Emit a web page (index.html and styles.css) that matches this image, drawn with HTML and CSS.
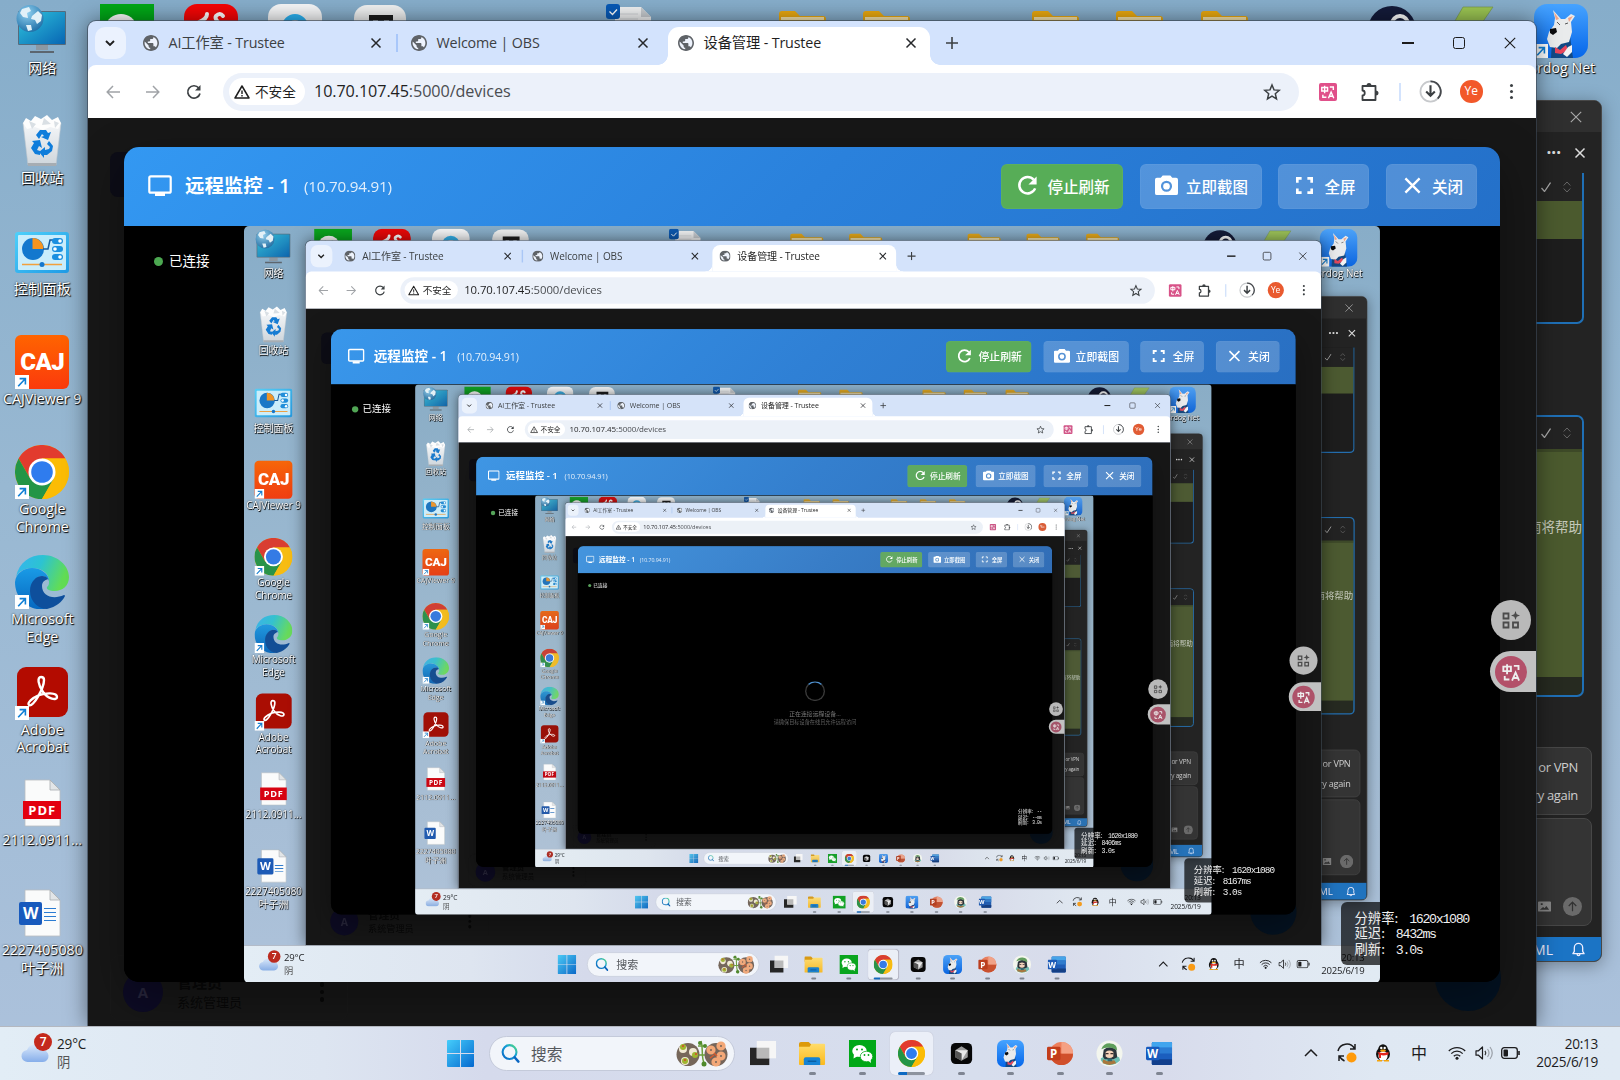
FILE: index.html
```html
<!DOCTYPE html>
<html lang="zh-CN">
<head>
<meta charset="utf-8">
<title>设备管理 - Trustee</title>
<link rel="stylesheet" href="styles.css">
</head>
<body>
<svg class="sprite" width="0" height="0" aria-hidden="true">
  <defs>
    <linearGradient id="g-screen" x1="0" y1="0" x2="1" y2="1"><stop offset="0" stop-color="#2fc4dc"/><stop offset="1" stop-color="#0866b4"/></linearGradient>
    <radialGradient id="g-globe" cx=".4" cy=".3" r=".8"><stop offset="0" stop-color="#8fd0f0"/><stop offset="1" stop-color="#1566a0"/></radialGradient>
    <linearGradient id="g-panel" x1="0" y1="0" x2="1" y2="1"><stop offset="0" stop-color="#4fd0fa"/><stop offset="1" stop-color="#1f9be6"/></linearGradient>
    <linearGradient id="g-bin" x1="0" y1="0" x2="0" y2="1"><stop offset="0" stop-color="#f4f6f8"/><stop offset="1" stop-color="#cfd6dc"/></linearGradient>
    <linearGradient id="g-edge-top" x1="0" y1="0" x2="1" y2=".3"><stop offset="0" stop-color="#35b3f2"/><stop offset=".5" stop-color="#2cc3d2"/><stop offset="1" stop-color="#62dd54"/></linearGradient>
    <linearGradient id="g-edge-mid" x1="0" y1="0" x2="0" y2="1"><stop offset="0" stop-color="#1a9be6"/><stop offset="1" stop-color="#0668c0"/></linearGradient>
    <linearGradient id="g-dog" x1="0" y1="0" x2="0" y2="1"><stop offset="0" stop-color="#46a3ff"/><stop offset="1" stop-color="#0566ea"/></linearGradient>
    <linearGradient id="g-win" x1="0" y1="0" x2="1" y2="1"><stop offset="0" stop-color="#45cdfb"/><stop offset="1" stop-color="#0569cf"/></linearGradient>
    <linearGradient id="g-lens" x1="0" y1="1" x2="1" y2="0"><stop offset="0" stop-color="#0a67c4"/><stop offset=".6" stop-color="#149ed8"/><stop offset="1" stop-color="#57e078"/></linearGradient>
    <linearGradient id="g-folder" x1="0" y1="0" x2="0" y2="1"><stop offset="0" stop-color="#ffdc6a"/><stop offset="1" stop-color="#fbb91c"/></linearGradient>
    <linearGradient id="g-cloud" x1="0" y1="0" x2="0" y2="1"><stop offset="0" stop-color="#d9e8fb"/><stop offset="1" stop-color="#86aeea"/></linearGradient>
  </defs>

  <symbol id="i-shortcut" viewBox="0 0 14 14"><path fill="#fff" d="M0 0h14v14H0z"/><path fill="none" stroke="#0f7fd6" stroke-width="1.6" d="M3.2 11.2 10 4M4.6 3.6h5.8v5.8"/></symbol>
  <symbol id="i-network" viewBox="0 0 54 54">
    <path fill="#8b98a3" d="M21 41h12v5H21z"/><path fill="#5c666f" d="M15 47h24v2H15z"/>
    <rect x="3" y="7" width="48" height="34" rx="1" fill="#556b7d"/><rect x="4" y="8" width="46" height="32" fill="url(#g-screen)"/>
    <circle cx="15" cy="14.500" r="13.500" fill="url(#g-globe)"/><path fill="#e2f1f8" d="M7 5l7-2 2 4-4 2 1 5-5-1-3-4zM17 12l6-5 4 4-1 6-4 3-2-4-4-1zM11 21l5 0 1 5-4 1z"/>
  </symbol>
  <symbol id="i-bin" viewBox="0 0 54 54">
    <path fill="url(#g-bin)" stroke="#c0c8ce" stroke-width=".6" d="M8 9h38l-5 42H13z"/><path fill="#a6adb3" d="M12.500 49h29l-.4 3H13z"/>
    <path fill="#fdfdfd" d="M8 9l3-5 5 3 4-5 6 3 6-4 5 5 6-3 3 6-3 6-8-2-7 3-8-3-8 2z"/><path fill="#d9dfe4" d="M14 7l7 3-4 5zM29 4l7 6-9 1zM39 7l5 2-4 5z"/>
    <path fill="#0f7ddb" d="M21 21l4-5h6l2 3 3-1-3 8-7-3 3-1-2-2-3 5zM17 27l8-1 2 8-3-2-2 4 3 1v4l-5-1-4-6 3-5zM34 27l4 5-1 5-5 4h-3v3l-5-6 6-5v3l4-1 1-2-3-3z"/>
  </symbol>
  <symbol id="i-panel" viewBox="0 0 54 54">
    <rect y="7" width="54" height="41" rx="3" fill="url(#g-panel)"/><rect x="3" y="10" width="48" height="35" rx="1" fill="#c9edfc"/>
    <circle cx="18" cy="24" r="11" fill="#1378ce"/><path fill="#f6941e" d="M17.500 13a11 11 0 0 1 11 11h-11z"/>
    <path fill="none" stroke="#15599c" stroke-width="1.500" d="M28 24h5l2-9h3"/>
    <g fill="#1a8fe0"><rect x="37" y="13" width="11" height="6" rx="3"/><rect x="37" y="21" width="11" height="6" rx="3"/><rect x="37" y="29" width="11" height="6" rx="3"/></g>
    <g fill="#fff"><circle cx="45" cy="16" r="1.800"/><circle cx="40" cy="24" r="1.800"/><circle cx="45" cy="32" r="1.800"/></g>
    <path stroke="#f2a03c" stroke-width="1.500" d="M7 39.500h40"/><circle cx="27" cy="39.500" r="2.500" fill="#1378ce"/>
  </symbol>
  <symbol id="i-chrome" viewBox="0 0 54 54">
    <circle cx="27" cy="27" r="27" fill="#fbbc05"/>
    <path fill="#e23b2e" d="M3.600 13.500A27 27 0 0 1 50.400 13.500H27L15.300 33.800z"/>
    <path fill="#239546" d="M3.600 13.500A27 27 0 0 0 27 54L38.700 33.800 15.300 33.800z"/>
    <path fill="#fbbc05" d="M50.400 13.500A27 27 0 0 1 27 54L38.700 33.800 27 13.500z"/>
    <circle cx="27" cy="27" r="13.500" fill="#fff"/><circle cx="27" cy="27" r="10.800" fill="#2f7cee"/>
  </symbol>
  <symbol id="i-edge" viewBox="0 0 54 54">
    <path fill="url(#g-edge-top)" d="M1 22C4 7 15 0 28 0c15 0 26 11 26 22 0 9-7 14-14 14-6 0-9-2-8-4 2-2 2-3 2-6 0-8-8-13-16-13C10 13 4 16 1 22z"/>
    <path fill="url(#g-edge-mid)" d="M0 27c1-9 9-14 17-14 9 0 17 6 17 13-1-3-4-5-7-5-5 0-11 6-11 14 0 10 7 17 16 19C14 57 0 44 0 27z"/>
    <path fill="#0e4f9c" d="M27 21c-6 0-12 6-12 15 0 11 9 18 17 18 9-2 15-7 18-13 0-1-1-1-1-1-11 5-22 1-22-9 0-5 4-6 6-7-1-2-3-3-6-3z"/>
  </symbol>
  <symbol id="i-acrobat" viewBox="0 0 54 54">
    <rect x="2" y="1" width="51" height="50" rx="9" fill="#b30b00"/>
    <path fill="none" stroke="#fff" stroke-width="2.400" stroke-linejoin="round" d="M26 11c-4 0-3 8 2 15s14 9 14 5c0-5-12-4-18-2-7 3-12 8-10 10 4 3 15-17 15-25 0-2-1-3-3-3z"/>
  </symbol>
  <symbol id="i-page" viewBox="0 0 54 54"><path fill="#fafbfb" stroke="#b9bec2" stroke-width=".8" d="M10 4h25l10 10v36H10z"/><path fill="#e2e5e7" stroke="#a8adb1" stroke-width=".8" d="M35 4v10h10z"/></symbol>
  <symbol id="i-dog" viewBox="0 0 54 54">
    <rect width="54" height="54" rx="13" fill="url(#g-dog)"/>
    <path fill="#124a86" d="M18 36l18-4 3 22H17z"/>
    <path fill="#e9ebec" d="M19 6l8 9 4 0 6-5 4 2-4 6 1 10-3 10-8 2-4 4-7-1-3-8 2-7 5-7 1-7z"/>
    <path fill="#f2a488" d="M20 8l5 7-3 1zM39 12l-4 6-1-4z"/><path fill="#0b0c0e" d="M16 25l6-1 1 4-4 3-3-2z"/>
    <path fill="none" stroke="#555" d="M23 18l3 3M31 20l3-1"/><path fill="#e8465c" d="M21 43l5 3 6-5 2 5-7 4-6-1z"/><path fill="#f3f3f3" d="M34 43l4-2v7l-5 5-4-3z"/>
  </symbol>
  <symbol id="i-folder" viewBox="0 0 54 54"><path fill="#eaa90f" d="M4 10c0-2 1-3 3-3h13l5 5h23c2 0 3 1 3 3v10H4z"/><path fill="url(#g-folder)" d="M4 17h47v27c0 2-1 3-3 3H7c-2 0-3-1-3-3z"/><path fill="#f8e6ad" d="M6 13h43v3H6z"/></symbol>
  <symbol id="i-wechat" viewBox="0 0 54 54"><path fill="#00a817" d="M0 0h54v54H0z"/><ellipse cx="21" cy="22" rx="14.500" ry="12" fill="#fff"/><path fill="#fff" d="M10 28l-1 9 9-5z"/><ellipse cx="35" cy="33" rx="12.500" ry="10.500" fill="#fff" stroke="#00a817" stroke-width="1.500"/><path fill="#fff" d="M38 41l6 5-1-8z"/><g fill="#00a817"><circle cx="16" cy="19" r="2"/><circle cx="26" cy="19" r="2"/><circle cx="31" cy="30" r="1.800"/><circle cx="39" cy="30" r="1.800"/></g></symbol>
  <symbol id="i-red" viewBox="0 0 54 54"><rect width="54" height="54" rx="13" fill="#f60505"/><path fill="none" stroke="#fff" stroke-width="4" stroke-linecap="round" d="M15 18q8-3 8-8M39 12q-3-4-7 0c-3 4 6 6 3 12"/></symbol>
  <symbol id="i-ring" viewBox="0 0 54 54"><rect width="54" height="54" rx="13" fill="#f6f7f8"/><circle cx="27" cy="23" r="10" fill="none" stroke="#2cb4f4" stroke-width="6"/></symbol>
  <symbol id="i-typora" viewBox="0 0 54 54"><rect x="1" y="1" width="52" height="52" rx="13" fill="#f1f2f2"/><path fill="#1d1d1d" d="M16 11h24v9h-4v-4h-5v20h-6V16h-5v4h-4z"/></symbol>
  <symbol id="i-text-file" viewBox="0 0 54 54"><path fill="#f2f3f4" d="M9 3h26l10 10v38H9z"/><path fill="#c9cdd1" d="M35 3v10h10z"/><path stroke="#d3d6d9" d="M14 10h18M14 15h18"/><rect width="14" height="15" rx="3" fill="#0759b6"/><path fill="none" stroke="#fff" stroke-width="1.300" d="M3.500 7.500l3 3 4.500-5"/></symbol>
  <symbol id="i-moon" viewBox="0 0 54 54"><circle cx="27" cy="26" r="24" fill="#141b3a"/><circle cx="35" cy="20" r="8" fill="none" stroke="#fff" stroke-width="4"/></symbol>
  <symbol id="i-slant" viewBox="0 0 54 54"><path fill="#9cc653" stroke="#76964a" stroke-width=".7" d="M13 3h30L25 29H-2z"/></symbol>

  <symbol id="i-site" viewBox="2 2 20 20"><circle cx="12" cy="12" r="9" fill="#eef3fd"/><path fill="#5f6368" d="M12 2C6.480 2 2 6.480 2 12s4.480 10 10 10 10-4.480 10-10S17.520 2 12 2zm-1 17.930c-3.950-.49-7-3.850-7-7.930 0-.62.080-1.210.210-1.790L9 15v1c0 1.100.9 2 2 2v1.930zm6.900-2.540c-.26-.81-1-1.390-1.900-1.390h-1v-3c0-.55-.45-1-1-1H8v-2h2c.55 0 1-.45 1-1V7h2c1.100 0 2-.9 2-2v-.41c2.930 1.190 5 4.060 5 7.410 0 2.080-.8 3.970-2.100 5.390z"/></symbol>
  <symbol id="i-x" viewBox="0 0 12 12"><path fill="none" stroke="currentColor" stroke-width="1.500" d="M1.500 1.500l9 9M10.500 1.500l-9 9"/></symbol>
  <symbol id="i-x-thin" viewBox="0 0 12 12"><path fill="none" stroke="currentColor" stroke-width="1.100" d="M.8.8l10.400 10.400M11.200.8L.8 11.200"/></symbol>
  <symbol id="i-plus" viewBox="0 0 12 12"><path fill="none" stroke="currentColor" stroke-width="1.600" d="M6 0v12M0 6h12"/></symbol>
  <symbol id="i-down" viewBox="0 0 12 12"><path fill="none" stroke="currentColor" stroke-width="1.900" d="M2 4l4 4 4-4"/></symbol>
  <symbol id="i-arrow" viewBox="0 0 14 14"><path fill="none" stroke="currentColor" stroke-width="1.500" d="M14 7H1.500M7 1L1.200 7 7 13"/></symbol>
  <symbol id="i-reload" viewBox="0 0 16 16"><path fill="none" stroke="currentColor" stroke-width="1.700" d="M14 9.500A6.200 6.200 0 1 1 12.800 4"/><path fill="currentColor" d="M14.500 1v5.600H9z"/></symbol>
  <symbol id="i-warn" viewBox="0 0 16 16"><path fill="none" stroke="currentColor" stroke-width="1.500" stroke-linejoin="round" d="M8 2L1 14h14z"/><path stroke="currentColor" stroke-width="1.400" d="M8 6.500v3.500M8 11v1.500"/></symbol>
  <symbol id="i-star" viewBox="0 0 18 18"><path fill="none" stroke="currentColor" stroke-width="1.500" d="M9 2l2 4.900 5.300.4-4 3.400 1.200 5.200L9 13.200l-4.500 2.700 1.200-5.200-4-3.400 5.300-.4z"/></symbol>
  <symbol id="i-puzzle" viewBox="0 0 20 20"><path fill="none" stroke="currentColor" stroke-width="1.800" stroke-linejoin="round" d="M2.500 4h13v14h-13v-4.500c3 0 3-5 0-5z"/><path fill="currentColor" d="M6.500 4a2.500 3 0 0 1 5 0zM15.500 8.500a3 2.500 0 0 1 0 5z"/></symbol>
  <symbol id="i-download" viewBox="0 0 24 24"><circle cx="12" cy="12" r="10.500" fill="none" stroke="#c7c9cc" stroke-width="1.800"/><path fill="none" stroke="#45484c" stroke-width="1.800" d="M12 1.500a10.500 10.500 0 0 1 7.500 18"/><path fill="none" stroke="#3c4043" stroke-width="2.200" d="M12 5.500v11M7.500 12l4.500 4.500L16.500 12"/></symbol>
  <symbol id="i-trans" viewBox="0 0 18 18"><g fill="none" stroke="currentColor" stroke-width="1.600"><path d="M2 4h6.500v3.800H2zM5.200 2v8.500M11 3.300h4v3.500M3.200 12v3h4"/><path d="M9.500 16l3-7 3 7M10.500 13.700h4"/></g></symbol>
  <symbol id="i-grid" viewBox="0 0 18 18"><g fill="none" stroke="currentColor" stroke-width="1.800"><path d="M1.500 2.500h5v5h-5zM1.500 11.500h5v5h-5zM11 11.500h5v5h-5z"/></g><path fill="currentColor" d="M13.500 0l1.200 3.300L18 4.500l-3.300 1.200L13.500 9l-1.200-3.300L9 4.500l3.300-1.200z"/></symbol>
  <symbol id="i-monitor" viewBox="0 0 24 24"><rect x="1.300" y="2.300" width="21.400" height="16.400" rx="1.500" fill="none" stroke="currentColor" stroke-width="2.200"/><path fill="currentColor" d="M7 19h10v3H7z"/></symbol>
  <symbol id="i-camera" viewBox="0 0 24 24"><path fill="currentColor" fill-rule="evenodd" d="M8 1.500h8l2 2.500h4a2 2 0 0 1 2 2v14a2 2 0 0 1-2 2H2a2 2 0 0 1-2-2V6a2 2 0 0 1 2-2h4zM12 7a5.800 5.800 0 1 0 0 11.600A5.800 5.800 0 0 0 12 7zm0 2.300a3.500 3.500 0 1 1 0 7 3.500 3.500 0 0 1 0-7z"/></symbol>
  <symbol id="i-full" viewBox="0 0 24 24"><path fill="none" stroke="currentColor" stroke-width="2.800" d="M9 4.500H4.500V9M15 4.500h4.500V9M4.500 15v4.500H9M19.500 15v4.500H15"/></symbol>
  <symbol id="i-refresh" viewBox="0 0 24 24"><path fill="none" stroke="currentColor" stroke-width="2.600" d="M20 15A8.600 8.600 0 1 1 18.500 6"/><path fill="currentColor" d="M21.500 2.500V11H13z"/></symbol>

  <symbol id="i-windows" viewBox="0 0 26 26"><path fill="url(#g-win)" d="M0 1q0-1 1-1h11.500v12.500H0zM13.500 0H25q1 0 1 1v11.500H13.500zM0 13.500h12.500V26H1q-1 0-1-1zM13.500 13.500H26V25q0 1-1 1H13.500z"/></symbol>
  <symbol id="i-lens" viewBox="0 0 20 20"><circle cx="9" cy="8.500" r="7.300" fill="none" stroke="url(#g-lens)" stroke-width="2.200"/><path stroke="#0a66c2" stroke-width="2.600" stroke-linecap="round" d="M14.300 14l4 4.500"/></symbol>
  <symbol id="i-food" viewBox="0 0 52 28">
    <circle cx="12" cy="14.500" r="11.500" fill="#76675a"/><circle cx="40" cy="14.500" r="11.500" fill="#75655a"/>
    <g fill="#f1ead4"><circle cx="7" cy="9" r="4"/><circle cx="17" cy="12" r="4"/><circle cx="9" cy="21" r="4"/></g><g fill="#9fb52f"><circle cx="7" cy="7" r="3"/><circle cx="19" cy="15" r="3"/><circle cx="9" cy="21" r="3"/></g><g fill="#d8452b"><circle cx="7" cy="6" r="1"/><circle cx="20" cy="14" r="1"/><circle cx="9" cy="20" r="1"/></g>
    <path fill="none" stroke="#6b9f3c" stroke-width="1.500" d="M25 1c3 8-1 14 4 25M22 6h8M23 15h6"/><g fill="#4f8a2b"><circle cx="24" cy="3" r="2"/><circle cx="29" cy="6" r="2"/><circle cx="28" cy="24" r="2.500"/></g>
    <g fill="none" stroke="#f3a878" stroke-width="3.600"><circle cx="35" cy="10" r="2.800"/><circle cx="45" cy="6" r="2.800"/><circle cx="45" cy="16" r="2.800"/><circle cx="40" cy="22" r="2.800"/></g><path stroke="#d65b2e" stroke-width="1.500" d="M38 13l3 3M34 18l4-3"/>
  </symbol>
  <symbol id="i-taskview" viewBox="0 0 28 28"><path fill="#262626" d="M0 8h20v18H0z"/><path fill="#f6f6f6" d="M7 1h20v18H7z"/><path fill="#b9b9b9" d="M7 8h13v11H7z"/></symbol>
  <symbol id="i-explorer" viewBox="0 0 28 28"><path fill="#dd9a0a" d="M0 4q0-2 2-2h8l3 3v5H0z"/><path fill="url(#g-folder)" d="M0 7h11l2-3h13q1 0 1 1v20q0 1-1 1H1q-1 0-1-1z"/><path fill="#1583d5" d="M5 26v-6q0-2 2-2h13q2 0 2 2v6z"/><path stroke="#075697" stroke-width="1.200" d="M9 22h9"/></symbol>
  <symbol id="i-cursor" viewBox="0 0 28 28"><rect x="3" y="3" width="22" height="22" rx="5" fill="#070707"/><path fill="#9a9a9a" d="M14 6.500l6.500 4v7.500L14 21.500 7.500 18v-7.500z"/><path fill="#e8e8e8" d="M7.500 10.500h13L14 21.500V14z"/><path fill="#555" d="M7.500 10.500v7.500l6.500 3.500V14z"/></symbol>
  <symbol id="i-ppt" viewBox="0 0 28 28"><circle cx="15" cy="14" r="12" fill="#ee7f5c"/><path fill="#d04f2b" d="M3 14h24a12 12 0 0 1-24 0z"/><path fill="#f5a184" d="M15 2a12 12 0 0 1 12 12H15z"/><rect y="7" width="14" height="14" rx="1.500" fill="#c33d1b"/></symbol>
  <symbol id="i-word" viewBox="0 0 28 28"><rect x="6" y="2" width="21" height="24" rx="1.500" fill="#1b5ebe"/><path fill="#41a5ee" d="M7.500 2h18Q27 2 27 3.500V8H6V3.500Q6 2 7.500 2z"/><path fill="#2b7cd3" d="M6 8h21v6H6z"/><path fill="#113f8c" d="M6 20h21v4.500q0 1.500-1.500 1.500h-18Q6 26 6 24.500z"/><rect y="7" width="14" height="14" rx="1.500" fill="#185abd"/></symbol>
  <symbol id="i-avatar" viewBox="0 0 28 28">
    <circle cx="14" cy="14" r="13.500" fill="#f3f6ee"/><path fill="#6bbfb4" d="M5 19q8-6 19-1l1 3q-4 5-11 5-6 0-9-5z"/>
    <path fill="#2b353c" d="M8 10q6-5 13 0l1 8-4 2H9l-2-3z"/><path fill="#f4d3ba" d="M10 12.500q4-3 8 0v4.500q-4 3.500-8 0z"/>
    <path fill="#5f9f5a" d="M5.500 9.500Q8 3 15 3.500t7 7l-6-2.500q-6-1-10.500 1.500z"/><path fill="#3d3030" d="M10 13.500h3v1.300h-3zM15 13.500h3v1.300h-3z"/>
    <path fill="#a9773c" d="M7 20l5 2 7-1 2 3-7 2-7-2z"/><path fill="#2f6a72" d="M12 19h4l1 3h-5z"/>
  </symbol>
  <symbol id="i-cloud" viewBox="0 0 28 20"><path fill="url(#g-cloud)" d="M7 19a6 6 0 0 1-1-12A8 8 0 0 1 21 7a6 6 0 0 1 1 12z"/></symbol>

  <symbol id="i-up" viewBox="0 0 14 14"><path fill="none" stroke="currentColor" stroke-width="1.500" d="M1 10l6-6 6 6"/></symbol>
  <symbol id="i-sync" viewBox="0 0 20 20"><path fill="none" stroke="currentColor" stroke-width="1.500" d="M1 8A9 9 0 0 1 17.500 5.500M18 1v5h-5M2 18v-5h5M2.500 13.500q2 3 5 4.500"/><circle cx="14.500" cy="14.500" r="5" fill="#ff9a0a"/></symbol>
  <symbol id="i-penguin" viewBox="0 0 16 18"><ellipse cx="8" cy="10" rx="7" ry="7" fill="#111"/><ellipse cx="8" cy="5.500" rx="4.800" ry="5.200" fill="#111"/><ellipse cx="8" cy="12" rx="4.600" ry="4.800" fill="#fff"/><circle cx="6.300" cy="4" r="1.200" fill="#fff"/><circle cx="9.700" cy="4" r="1.200" fill="#fff"/><ellipse cx="8" cy="6.700" rx="3" ry="1.100" fill="#f5a30a"/><path fill="#e5261d" d="M2.500 8q5.500 2 11 0v2.500Q8 12 6 11v3H4v-3.500z"/><path fill="#f5a30a" d="M2 16h5v1.500H2zM9 16h5v1.500H9z"/></symbol>
  <symbol id="i-wifi" viewBox="0 0 18 14"><g fill="none" stroke="currentColor" stroke-width="1.300"><path d="M.8 5a11.500 11.500 0 0 1 16.400 0M3.300 7.600a8 8 0 0 1 11.400 0M5.800 10.200a4.500 4.500 0 0 1 6.400 0"/></g><circle cx="9" cy="12.300" r="1.500" fill="currentColor"/></symbol>
  <symbol id="i-volume" viewBox="0 0 18 14"><path fill="none" stroke="currentColor" stroke-width="1.200" stroke-linejoin="round" d="M1 4.800h2.500L7.500 1v12L3.500 9.200H1z"/><g fill="none" stroke-width="1.200"><path stroke="#333" d="M10 4.800q1.600 2.200 0 4.400"/><path stroke="#9aa0a8" d="M12.500 3q3 4 0 8M15 1q4.500 6 0 12"/></g></symbol>
  <symbol id="i-battery" viewBox="0 0 19 12"><rect x=".7" y=".7" width="15.600" height="10.600" rx="2.500" fill="none" stroke="currentColor" stroke-width="1.300"/><rect x="2.500" y="2.500" width="4.500" height="7" rx="1" fill="currentColor"/><path fill="currentColor" d="M17.200 4h1.600v4h-1.600z"/></symbol>
  <symbol id="i-bell" viewBox="0 0 14 16"><path fill="none" stroke="currentColor" stroke-width="1.400" stroke-linejoin="round" d="M1 12.500h12l-1.500-2.500V6a4.500 4.500 0 0 0-9 0v4zM5.500 13a1.500 1.500 0 0 0 3 0"/></symbol>
  <symbol id="i-check" viewBox="0 0 10 10"><path fill="none" stroke="currentColor" stroke-width="1.300" d="M.5 6l3 3.500L9.500.5"/></symbol>
  <symbol id="i-updown" viewBox="0 0 8 12"><path fill="none" stroke="currentColor" stroke-width="1" d="M.7 4.500L4 1l3.300 3.500M.7 7.500L4 11l3.300-3.500"/></symbol>
  <symbol id="i-image" viewBox="0 0 14 11"><path fill="currentColor" fill-rule="evenodd" d="M1 0h12q1 0 1 1v9q0 1-1 1H1q-1 0-1-1V1q0-1 1-1zM2 9h10L9 5 7 7.500 5.500 6zM3 2v2h2V2z"/></symbol>
  <symbol id="i-send" viewBox="0 0 20 20"><circle cx="10" cy="10" r="10" fill="#6a6a6a"/><path fill="none" stroke="#333" stroke-width="1.300" d="M10 15V5.500M6 9.500l4-4 4 4"/></symbol>
</svg>

<template id="desktop-template">
  <div class="desktop">
    <div class="shortcuts">
      <div class="shortcut c1 r1"><svg><use href="#i-network"/></svg><span>网络</span></div>
      <div class="shortcut c1 r2"><svg><use href="#i-bin"/></svg><span>回收站</span></div>
      <div class="shortcut c1 r3"><svg><use href="#i-panel"/></svg><span>控制面板</span></div>
      <div class="shortcut c1 r4"><div class="tile caj">CAJ<svg class="link"><use href="#i-shortcut"/></svg></div><span>CAJViewer 9</span></div>
      <div class="shortcut c1 r5"><div class="tile"><svg><use href="#i-chrome"/></svg><svg class="link"><use href="#i-shortcut"/></svg></div><span>Google<br>Chrome</span></div>
      <div class="shortcut c1 r6"><div class="tile"><svg><use href="#i-edge"/></svg><svg class="link"><use href="#i-shortcut"/></svg></div><span>Microsoft<br>Edge</span></div>
      <div class="shortcut c1 r7"><div class="tile"><svg><use href="#i-acrobat"/></svg><svg class="link"><use href="#i-shortcut"/></svg></div><span>Adobe<br>Acrobat</span></div>
      <div class="shortcut c1 r8"><div class="tile"><svg><use href="#i-page"/></svg><b class="pdf-band">PDF</b></div><span>2112.0911...</span></div>
      <div class="shortcut c1 r9"><div class="tile"><svg><use href="#i-page"/></svg><b class="word-badge">W</b><i class="word-lines"></i></div><span>2227405080<br>叶子洲</span></div>
      <div class="shortcut c2"><svg><use href="#i-wechat"/></svg></div>
      <div class="shortcut c3"><svg><use href="#i-red"/></svg></div>
      <div class="shortcut c4"><svg><use href="#i-ring"/></svg></div>
      <div class="shortcut c5"><svg><use href="#i-typora"/></svg></div>
      <div class="shortcut c8"><svg><use href="#i-text-file"/></svg></div>
      <div class="shortcut c10"><svg><use href="#i-folder"/></svg></div>
      <div class="shortcut c11"><svg><use href="#i-folder"/></svg></div>
      <div class="shortcut c13"><svg><use href="#i-folder"/></svg></div>
      <div class="shortcut c14"><svg><use href="#i-folder"/></svg></div>
      <div class="shortcut c15"><svg><use href="#i-folder"/></svg></div>
      <div class="shortcut c17"><svg><use href="#i-moon"/></svg></div>
      <div class="shortcut c18"><svg><use href="#i-slant"/></svg></div>
      <div class="shortcut c19"><div class="tile"><svg><use href="#i-dog"/></svg><svg class="link"><use href="#i-shortcut"/></svg></div><span>srdog Net</span></div>
    </div>

    <section class="editor">
      <div class="editor-title"><svg><use href="#i-x-thin"/></svg></div>
      <div class="editor-actions"><b>···</b><svg><use href="#i-x"/></svg></div>
      <div class="diff first"><div class="diff-tools"><svg class="check"><use href="#i-check"/></svg><svg class="updown"><use href="#i-updown"/></svg></div><div class="added"></div></div>
      <div class="diff second"><div class="diff-tools"><svg class="check"><use href="#i-check"/></svg><svg class="updown"><use href="#i-updown"/></svg></div><div class="added">南将帮助</div></div>
      <div class="notice"><p>or VPN</p><p>ry again</p></div>
      <div class="prompt"><svg class="image"><use href="#i-image"/></svg><svg class="send"><use href="#i-send"/></svg></div>
      <div class="editor-status"><span>ML</span><svg><use href="#i-bell"/></svg></div>
    </section>

    <section class="browser">
      <div class="tabs">
        <div class="tab-search"><svg><use href="#i-down"/></svg></div>
        <div class="tab one"><svg class="fav"><use href="#i-site"/></svg><span>AI工作室 - Trustee</span><svg class="close"><use href="#i-x"/></svg></div>
        <div class="tab two"><svg class="fav"><use href="#i-site"/></svg><span>Welcome | OBS</span><svg class="close"><use href="#i-x"/></svg></div>
        <div class="tab active"><svg class="fav"><use href="#i-site"/></svg><span>设备管理 - Trustee</span><svg class="close"><use href="#i-x"/></svg></div>
        <svg class="new-tab"><use href="#i-plus"/></svg>
        <div class="win-controls"><i class="min"></i><i class="max"></i><svg><use href="#i-x-thin"/></svg></div>
      </div>
      <div class="toolbar">
        <div class="nav"><svg class="dim"><use href="#i-arrow"/></svg><svg class="dim flip"><use href="#i-arrow"/></svg><svg><use href="#i-reload"/></svg></div>
        <div class="omnibox">
          <div class="chip"><svg><use href="#i-warn"/></svg>不安全</div>
          <div class="url"><em>10.70.107.45</em>:5000/devices</div>
          <svg class="star"><use href="#i-star"/></svg>
        </div>
        <div class="tools">
          <div class="ext"><svg><use href="#i-trans"/></svg></div>
          <svg class="puzzle"><use href="#i-puzzle"/></svg>
          <i class="sep"></i>
          <svg class="download"><use href="#i-download"/></svg>
          <div class="profile">Ye</div>
          <div class="kebab"><i></i><i></i><i></i></div>
        </div>
      </div>
      <div class="page">
        <div class="menu-toggle"></div>
        <div class="user-card"><div class="user-avatar">A</div><div class="user-text"><b>管理员</b><span>系统管理员</span></div><div class="kebab"><i></i><i></i><i></i></div></div>
        <div class="fab"></div>
        <div class="modal">
          <header class="modal-head">
            <svg class="monitor"><use href="#i-monitor"/></svg>
            <h1>远程监控 - 1</h1><span class="ip">(10.70.94.91)</span>
            <div class="actions">
              <button class="go"><svg><use href="#i-refresh"/></svg>停止刷新</button>
              <button><svg><use href="#i-camera"/></svg>立即截图</button>
              <button><svg><use href="#i-full"/></svg>全屏</button>
              <button><svg class="cross"><use href="#i-x"/></svg>关闭</button>
            </div>
          </header>
          <div class="viewer">
            <div class="frame"></div>
            <div class="connected"><i></i>已连接</div>
            <div class="stats"><p>分辨率: <code class="resolution"></code></p><p>延迟: <code class="latency"></code></p><p>刷新: <code>3.0s</code></p></div>
          </div>
        </div>
        <div class="float-grid"><svg><use href="#i-grid"/></svg></div>
        <div class="float-translate"><div><svg><use href="#i-trans"/></svg></div></div>
      </div>
    </section>

    <footer class="taskbar">
      <div class="weather"><div class="weather-icon"><svg><use href="#i-cloud"/></svg><b>7</b></div><p>29°C<br><span>阴</span></p></div>
      <div class="dock">
        <svg class="start"><use href="#i-windows"/></svg>
        <div class="search"><svg class="lens"><use href="#i-lens"/></svg><span>搜索</span><svg class="food"><use href="#i-food"/></svg></div>
        <div class="app"><svg><use href="#i-taskview"/></svg></div>
        <div class="app run"><svg><use href="#i-explorer"/></svg></div>
        <div class="app run"><svg><use href="#i-wechat"/></svg></div>
        <div class="app current"><svg><use href="#i-chrome"/></svg></div>
        <div class="app run"><svg><use href="#i-cursor"/></svg></div>
        <div class="app run"><svg><use href="#i-dog"/></svg></div>
        <div class="app run"><svg><use href="#i-ppt"/></svg><b>P</b></div>
        <div class="app run"><svg><use href="#i-avatar"/></svg></div>
        <div class="app run"><svg><use href="#i-word"/></svg><b>W</b></div>
      </div>
      <div class="tray">
        <svg class="up"><use href="#i-up"/></svg><svg class="sync"><use href="#i-sync"/></svg><svg class="penguin"><use href="#i-penguin"/></svg><span class="ime">中</span>
        <svg class="wifi"><use href="#i-wifi"/></svg><svg class="volume"><use href="#i-volume"/></svg><svg class="battery"><use href="#i-battery"/></svg>
        <p class="clock">20:13<br>2025/6/19</p>
      </div>
    </footer>
  </div>
</template>

<main id="root"></main>
<script src="script.js"></script>
</body>
</html>
```

FILE: styles.css
```css
* { box-sizing: border-box; }
body { margin: 0; overflow: hidden; font-family: "Open Sans", "Noto Sans CJK SC", sans-serif; }
p, h1 { margin: 0; }
svg { display: block; flex: none; }
i, em { font-style: normal; }
#root { width: 1620px; height: 1080px; overflow: hidden; }

.desktop {
  position: relative; width: 1620px; height: 1080px; overflow: hidden; flex: none;
  background: linear-gradient(180deg, #86adca 0, #98b8d2 45%, #adc2dc 100%);
}

/* desktop shortcuts */
.shortcuts { display: grid; grid-template-columns: repeat(19, 84.4px); grid-template-rows: repeat(9, 110.3px); padding-top: 4px; }
.shortcut { grid-row: 1; display: flex; flex-direction: column; align-items: center; }
.shortcut > svg, .tile, .tile > svg { width: 54px; height: 54px; flex: none; }
.shortcut span {
  margin-top: 1px; white-space: nowrap; text-align: center; font-size: 14.2px; line-height: 17.6px; color: #fff;
  text-shadow: 1px 1px 1px #000, 0 0 2px rgba(0, 0, 0, .75);
}
.tile { position: relative; }
.tile > .link { position: absolute; left: 0; bottom: 0; width: 14px; height: 14px; }
.caj { border-radius: 6px; background: linear-gradient(#ff6400, #fb3a0c); color: #fff; font: 900 24px/54px "Roboto", sans-serif; text-align: center; letter-spacing: -.5px; }
.pdf-band { position: absolute; left: 8px; top: 25px; width: 38px; height: 18px; background: #e3000f; color: #fff; font-size: 13px; line-height: 18px; text-align: center; letter-spacing: 1px; }
.word-badge { position: absolute; left: 4px; top: 16px; width: 23px; height: 23px; border-radius: 2px; background: #185abd; color: #fff; font-size: 16px; line-height: 23px; text-align: center; }
.word-lines { position: absolute; left: 29px; top: 22px; width: 12px; height: 13px; background: repeating-linear-gradient(#2b7cd3 0 1px, transparent 1px 4px); }
.c1 { grid-column: 1; } .c2 { grid-column: 2; } .c3 { grid-column: 3; } .c4 { grid-column: 4; } .c5 { grid-column: 5; }
.c8 { grid-column: 8; } .c10 { grid-column: 10; } .c11 { grid-column: 11; } .c13 { grid-column: 13; } .c14 { grid-column: 14; }
.c15 { grid-column: 15; } .c17 { grid-column: 17; } .c18 { grid-column: 18; } .c19 { grid-column: 19; }
.c19 span { padding-left: 3px; }
.r2 { grid-row: 2; } .r3 { grid-row: 3; } .r4 { grid-row: 4; } .r5 { grid-row: 5; }
.r6 { grid-row: 6; } .r7 { grid-row: 7; } .r8 { grid-row: 8; } .r9 { grid-row: 9; }

/* code editor behind the browser */
.editor {
  position: absolute; left: 1400px; top: 100px; width: 202px; height: 862px; display: flex; flex-direction: column; align-items: flex-end;
  overflow: hidden; border-radius: 8px; border: 1px solid #484848; background: #232323; box-shadow: 0 3px 18px rgba(0, 0, 0, .35);
}
.editor-title { display: flex; justify-content: flex-end; align-items: center; width: 100%; height: 31px; padding-right: 19px; background: #2f2f2f; color: #aaa; }
.editor-title svg { width: 12px; height: 12px; }
.editor-actions { display: flex; align-items: center; gap: 13px; height: 41px; padding-right: 15px; color: #ddd; }
.editor-actions svg { width: 12px; height: 12px; }
.editor-actions b { font-size: 17px; }
.diff { width: 150px; margin-right: 17px; border: 2px solid #1f6fb5; display: flex; flex-direction: column; }
.diff-tools { display: flex; justify-content: flex-end; align-items: center; gap: 12.500px; padding-right: 11px; }
.diff .check { width: 10px; height: 10px; color: #aaa; }
.diff .updown { width: 8px; height: 12px; color: #666; }
.added { background: #4b5a2e; }
.first { height: 151px; border-top: 0; border-radius: 0 0 7px 7px; background: #1d1d1d; }
.first .diff-tools { height: 28px; background: #232323; }
.first .added { height: 38px; }
.second { height: 282px; margin-top: 91px; border-radius: 7px; background: #262a20; }
.second .diff-tools { height: 32px; background: #232323; border-radius: 6px 6px 0 0; }
.second .added { height: 228px; padding-top: 64px; text-align: right; color: #c5c9bb; font: 13.500px/20px "Noto Sans CJK SC", sans-serif; border-top: 3px solid #3d4927; }
.notice, .prompt { width: 160px; margin-right: 9px; border: 1px solid #474747; border-radius: 8px; background: #343434; }
.notice { height: 68px; margin-top: 50px; padding: 5px 13px; text-align: right; color: #cfcfcf; font-size: 13px; line-height: 28px; letter-spacing: -.35px; }
.prompt { height: 108px; margin-top: 3px; display: flex; justify-content: flex-end; align-items: flex-end; gap: 12px; padding: 0 9px 9px; }
.prompt .image { width: 13px; height: 11px; margin-bottom: 4px; color: #858585; }
.prompt .send { width: 19px; height: 19px; }
.editor-status { display: flex; justify-content: flex-end; align-items: center; gap: 19px; width: 100%; height: 24px; margin-top: auto; padding-right: 16px; background: #1b74c5; color: #eef; font-size: 14px; }
.editor-status svg { width: 13px; height: 15px; }

/* browser window */
.browser {
  position: absolute; left: 88px; top: 21px; width: 1448px; height: 1005px; display: flex; flex-direction: column;
  overflow: hidden; border-radius: 8px 8px 0 0; box-shadow: 0 0 0 1px rgba(60, 70, 85, .65), 0 0 22px rgba(0, 0, 0, .5); background: #d3e3fd;
}
.tabs { display: flex; height: 44px; padding: 6px 20px 0 6.500px; color: #3c4043; font-size: 14.300px; letter-spacing: -.15px; }
.tab-search { width: 31px; height: 32px; margin-right: 4px; border-radius: 10px; background: #ebf2fe; display: grid; place-items: center; color: #1f1f1f; }
.tab-search svg { width: 12px; height: 12px; }
.tab { position: relative; display: flex; align-items: center; height: 38px; padding-bottom: 6px; }
.tab .fav { width: 16px; height: 16px; margin-right: 10px; }
.tab .close { width: 12px; height: 12px; margin-left: auto; color: #26282b; }
.tab span { white-space: nowrap; line-height: 20px; }
.one { width: 267px; padding-left: 13px; padding-right: 15px; }
.one::after { content: ""; position: absolute; right: -1px; top: 7px; width: 2px; height: 18px; background: #a8c7fa; }
.two { width: 271px; padding-left: 14px; padding-right: 19px; }
.active { width: 262px; padding-left: 10px; padding-right: 13px; border-radius: 11px 11px 0 0; background: #fff; color: #1f1f1f; }
.active::before, .active::after { content: ""; position: absolute; bottom: 0; width: 10px; height: 10px; }
.active::before { left: -10px; background: radial-gradient(circle at 0 0, transparent 9.500px, #fff 10px); }
.active::after { right: -10px; background: radial-gradient(circle at 100% 0, transparent 9.500px, #fff 10px); }
.new-tab { width: 12px; height: 12px; margin: 10px 0 0 16px; color: #3c4043; }
.win-controls { display: flex; align-items: center; gap: 39px; height: 32px; margin-left: auto; color: #1b1b1b; }
.win-controls .min { width: 12px; height: 1.300px; background: #1b1b1b; }
.win-controls .max { width: 12px; height: 12px; border: 1.400px solid #1b1b1b; border-radius: 2.500px; }
.win-controls svg { width: 12px; height: 12px; }
.toolbar { display: flex; align-items: center; height: 53px; padding-right: 22px; border-radius: 8px 8px 0 0; background: #fff; }
.nav { display: flex; align-items: center; gap: 26px; width: 135px; padding-left: 18px; color: #3c4043; }
.nav svg { width: 14px; height: 14px; }
.nav svg:last-child { width: 16px; height: 16px; }
.nav .dim { color: #a0a3a7; }
.flip { transform: scaleX(-1); }
.omnibox { display: flex; align-items: center; width: 1076px; height: 38px; padding: 0 18px 0 6px; border-radius: 19px; background: #ecf1fa; }
.chip { display: flex; align-items: center; gap: 5px; width: 76px; height: 27px; padding-left: 5px; border-radius: 14px; background: #fff; color: #1f1f1f; font-size: 13.600px; white-space: nowrap; line-height: 20px; }
.chip svg { width: 16px; height: 16px; }
.url { margin: -2px 0 0 9px; font-size: 16.200px; color: #4a4d51; letter-spacing: -.1px; }
.url em { color: #1f1f1f; }
.star { width: 18px; height: 18px; margin-left: auto; color: #3c4043; }
.tools { display: flex; align-items: center; padding-left: 20px; color: #3c4043; }
.ext { width: 18px; height: 18px; border-radius: 2px; background: #e0508a; color: #fff; }
.ext svg { width: 18px; height: 18px; padding: 1px; }
.puzzle { width: 20px; height: 20px; margin-left: 23px; }
.sep { width: 2px; height: 18px; margin: 0 18px 0 19px; background: #d3e3fd; }
.download { width: 23px; height: 23px; }
.profile { width: 22.500px; height: 22.500px; margin: 0 27px 0 18px; border-radius: 50%; background: #f2582a; color: #fff; font-size: 12px; line-height: 22px; text-align: center; }
.kebab { display: flex; flex-direction: column; gap: 3.200px; }
.kebab i { width: 3.200px; height: 3.200px; border-radius: 50%; background: currentColor; }

/* dimmed page */
.page { position: relative; flex: 1; padding: 29px 36px 0; background: #171717; }
.menu-toggle { position: absolute; left: 22px; top: 34px; width: 60px; height: 45px; border-radius: 8px; background: #0d0d17; }
.user-card { position: absolute; left: 22px; bottom: 5px; width: 238px; height: 66px; display: flex; align-items: center; padding: 8px 23px 0 12px; border: 1px solid #191919; border-radius: 10px; color: #080808; font-size: 13px; line-height: 20px; }
.user-avatar { width: 40px; height: 40px; margin-right: 14px; border-radius: 50%; background: #0d0b25; color: #28263c; font-weight: 700; font-size: 15px; line-height: 40px; text-align: center; }
.user-text { display: flex; flex-direction: column; margin-right: auto; }
.user-text b { font-size: 15px; }
.user-card .kebab i { width: 4.500px; height: 4.500px; }
.fab { position: absolute; right: 35px; bottom: 15px; width: 66px; height: 66px; border-radius: 50%; background: #031222; }
.modal { position: relative; width: 1376px; height: 835px; overflow: hidden; border-radius: 15px; background: #000; box-shadow: 0 16px 46px rgba(0, 0, 0, .35); }
.modal-head { display: flex; align-items: center; height: 78.500px; padding: 0 23px 0 24px; background: linear-gradient(135deg, #3398f2 0, #2a81dc 50%, #2470c9 100%); color: #fff; }
.monitor { width: 24px; height: 24px; margin-right: 13px; }
.modal-head h1 { font-size: 19.400px; line-height: 26px; font-weight: 600; white-space: nowrap; }
.ip { margin-left: 14px; font-size: 15.200px; opacity: .85; letter-spacing: -.2px; }
.actions { display: flex; gap: 16.500px; margin-left: auto; }
.actions button { display: flex; align-items: center; gap: 8px; height: 45px; padding: 0 13px 1px 14px; border: 1px solid rgba(255, 255, 255, .04); border-radius: 6px; background: rgba(255, 255, 255, .2); color: #fff; font: 500 15.500px "Noto Sans CJK SC", sans-serif; white-space: nowrap; }
.actions .go { background: #57ad57; }
.actions svg { width: 23px; height: 23px; }
.actions .cross { padding: 2px; }
.viewer { position: relative; height: 756.500px; display: flex; justify-content: center; background: #000; }
.frame { width: 1136px; height: 757px; overflow: hidden; border-radius: 5px; filter: saturate(.93); }
.frame > .desktop { transform: scale(.7012, .701); transform-origin: 0 0; }
.loading { height: 756px; display: flex; flex-direction: column; align-items: center; justify-content: center; color: #7a7a7a; }
.loading i { width: 58px; height: 58px; margin-bottom: 24px; border: 4px solid #3a3a3a; border-top-color: #3d95e8; border-radius: 50%; }
.loading p { font-size: 17px; line-height: 26px; }
.loading small { font-size: 15px; line-height: 22px; color: #626262; }
.connected { position: absolute; left: 30px; top: 26px; display: flex; align-items: center; gap: 6px; color: #fff; font-size: 13.500px; line-height: 19px; }
.connected i { width: 9px; height: 9px; border-radius: 50%; background: #4ca851; }
.stats { position: absolute; right: 17px; bottom: 17px; padding: 8px 14px 9px 14px; border-radius: 6px; background: rgba(0, 0, 0, .7); color: #f0f0f0; font: 13.300px/15.400px "Noto Sans CJK SC", sans-serif; }
.stats p { height: 15.400px; white-space: pre; word-spacing: 8px; }
.stats code { font: 13.300px/1 "Liberation Mono", monospace; letter-spacing: -1.330px; }
.float-grid, .float-translate { position: absolute; right: 0; }
.float-grid { right: 5px; top: 482px; width: 40px; height: 40px; border-radius: 50%; background: #b9b9b9; display: grid; place-items: center; color: #4b4b4b; }
.float-grid svg { width: 18px; height: 18px; }
.float-translate { top: 533px; width: 46px; height: 41px; padding: 5px; border-radius: 21px 0 0 21px; background: #c1c1c1; }
.float-translate div { width: 32px; height: 32px; border-radius: 50%; background: #b35069; color: #eee; display: grid; place-items: center; }
.float-translate svg { width: 21px; height: 21px; }

/* taskbar */
.taskbar {
  position: absolute; left: 0; right: 0; bottom: 0; height: 54px; display: flex; justify-content: space-between; border-top: 1px solid #b4b8c0;
  background: linear-gradient(90deg, #e2edf6 0, #dde5f1 20%, #d5daec 30%, #d7deed 60%, #d8dcec 72%, #dfe8f3 85%, #e0eaf4 100%); color: #1e1f22;
}
.weather { display: flex; align-items: center; padding: 0 0 2px 21px; font-size: 13.600px; line-height: 18px; width: 447px; letter-spacing: -.2px; }
.weather span { font-size: 13.300px; color: #555; }
.weather-icon { position: relative; width: 28px; height: 20px; margin-right: 8px; }
.weather-icon svg { width: 28px; height: 20px; }
.weather-icon b { position: absolute; right: -3px; top: -10px; width: 18px; height: 18px; border-radius: 50%; background: #c4291c; color: #fff; font-size: 12px; line-height: 18px; font-weight: 600; text-align: center; }
.dock { display: flex; align-items: center; margin-right: auto; }
.start { width: 27px; height: 27px; margin-right: 15px; }
.search { display: flex; align-items: center; width: 246px; height: 35px; margin-right: 6.500px; padding: 0 6px 0 11px; border: 1px solid #c4cada; border-radius: 18px; background: #f2f5fa; color: #55585d; font-size: 15.700px; line-height: 22px; }
.lens { width: 19px; height: 19px; margin-right: 11px; }
.food { width: 52px; height: 28px; margin-left: auto; }
.app { position: relative; display: grid; place-items: center; width: 43px; height: 43px; margin-right: 6.500px; border-radius: 5px; }
.app svg { width: 27px; height: 27px; }
.app b { position: absolute; left: 8px; top: 14.500px; width: 14px; color: #fff; font-size: 11.500px; line-height: 14px; text-align: center; }
.run::after { content: ""; position: absolute; left: 18px; bottom: 0; width: 7px; height: 3.500px; border-radius: 2px; background: #7f8592; }
.current { background: #ebeff8; box-shadow: 0 0 1px #aab; }
.current::after { content: ""; position: absolute; left: 8px; bottom: 0; width: 27px; height: 3px; border-radius: 2px; background: linear-gradient(90deg, #0d69c2 9px, #8d939e 9px); }
.tray { display: flex; align-items: center; padding: 0 22px 2px 0; color: #1c1c1e; }
.up { width: 14px; height: 14px; margin-right: 19px; }
.sync { width: 20px; height: 20px; margin-right: 18px; }
.penguin { width: 16px; height: 18px; margin-right: 20px; }
.ime { width: 17px; margin-right: 20px; font-size: 16px; line-height: 20px; }
.wifi { width: 18px; height: 14px; margin-right: 8.500px; }
.volume { width: 18px; height: 14px; margin-right: 8.500px; }
.battery { width: 19px; height: 12px; margin-right: 16px; }
.clock { width: 62px; font-size: 13.600px; line-height: 18px; text-align: right; letter-spacing: -.3px; white-space: nowrap; }
```

FILE: script.js
```js
// Each viewer shows the remote desktop again, until the one that is still loading.
const frames = [
  { resolution: '1620x1080', latency: '8432ms' },
  { resolution: '1620x1080', latency: '8167ms' },
  { resolution: '1620x1080', latency: '8406ms' },
  { resolution: '--', latency: '--ms' }
];
const template = document.getElementById('desktop-template');

function mount(target, depth) {
  const desktop = template.content.cloneNode(true);
  desktop.querySelector('.resolution').textContent = frames[depth].resolution;
  desktop.querySelector('.latency').textContent = frames[depth].latency;
  const frame = desktop.querySelector('.frame');
  if (depth < frames.length - 1) {
    mount(frame, depth + 1);
  } else {
    frame.innerHTML = '<div class="loading"><i></i><p>正在连接远程设备...</p><small>请确保目标设备在线且允许远程访问</small></div>';
  }
  target.appendChild(desktop);
}

mount(document.getElementById('root'), 0);
```
